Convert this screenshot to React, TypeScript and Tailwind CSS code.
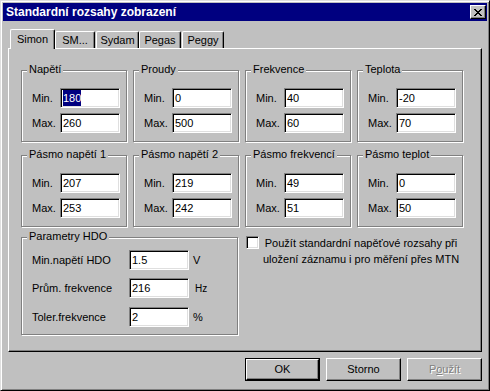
import React from "react";

const raised =
  "border border-t-white border-l-white border-r-black border-b-black shadow-[inset_-1px_-1px_0_#808080]";
const sunken =
  "border border-t-[#808080] border-l-[#808080] border-r-white border-b-white shadow-[inset_1px_1px_0_#000,inset_-1px_-1px_0_#dfdfdf]";
const etched = "border border-[#808080] shadow-[inset_1px_1px_0_#fff,1px_1px_0_#fff]";

const Group = ({
  title,
  className,
  children,
}: {
  title: string;
  className: string;
  children: React.ReactNode;
}) => (
  <div className={`relative ${etched} ${className}`}>
    <span className="absolute -top-[8px] left-[5px] bg-[#c0c0c0] px-[2px] leading-[13px] whitespace-nowrap">
      {title}
    </span>
    {children}
  </div>
);

const TextBox = ({ value, selected }: { value: string; selected?: boolean }) => (
  <div className={`w-[60px] h-[20px] bg-white ${sunken} flex items-center pl-[2px]`}>
    <span className={selected ? "bg-[#000080] text-white" : ""}>{value}</span>
  </div>
);

const Field = ({ label, value, selected }: { label: string; value: string; selected?: boolean }) => (
  <div className="flex items-center h-[20px]">
    <span className="w-[28px]">{label}</span>
    <TextBox value={value} selected={selected} />
  </div>
);

const RangeGroup = ({
  title,
  min,
  max,
  selected,
}: {
  title: string;
  min: string;
  max: string;
  selected?: boolean;
}) => (
  <Group title={title} className="w-[106px] h-[72px] pt-[17px] pl-[10px]">
    <div className="flex flex-col gap-[5px]">
      <Field label="Min." value={min} selected={selected} />
      <Field label="Max." value={max} />
    </div>
  </Group>
);

const tabs = [
  { name: "Simon", w: "w-[45px]", ml: "" },
  { name: "SM...", w: "w-[40px]", ml: "" },
  { name: "Sydam", w: "w-[43px]", ml: "ml-[1px]" },
  { name: "Pegas", w: "w-[42px]", ml: "" },
  { name: "Peggy", w: "w-[42px]", ml: "ml-[1px]" },
];

const Button = ({
  children,
  isDefault,
  disabled,
}: {
  children: React.ReactNode;
  isDefault?: boolean;
  disabled?: boolean;
}) =>
  isDefault ? (
    <div className="w-[75px] h-[23px] border border-black">
      <div className={`w-full h-full ${raised} flex items-center justify-center`}>{children}</div>
    </div>
  ) : (
    <div
      className={`w-[75px] h-[23px] ${raised} flex items-center justify-center ${
        disabled ? "text-[#808080] [text-shadow:1px_1px_0_#fff]" : ""
      }`}
    >
      {children}
    </div>
  );

const App = () => {
  return (
    <div className="w-[490px] h-[391px] bg-[#c0c0c0] border border-t-[#dfdfdf] border-l-[#dfdfdf] border-r-black border-b-black shadow-[inset_1px_1px_0_#fff,inset_-1px_-1px_0_#808080] p-[2px] flex flex-col text-[11px] text-black font-['Liberation_Sans',Arial,sans-serif] select-none">
      {/* Title bar */}
      <div className="h-[18px] bg-[#000080] flex items-center justify-between pl-[3px] pr-[1px]">
        <span className="text-white font-bold text-[12px] leading-none">Standardní rozsahy zobrazení</span>
        <div className={`w-[16px] h-[14px] bg-[#c0c0c0] ${raised} flex items-center justify-center`}>
          <svg width="8" height="7" viewBox="0 0 8 7" shapeRendering="crispEdges">
            <path
              d="M0 0h2v1h-2zM6 0h2v1h-2zM1 1h2v1h-2zM5 1h2v1h-2zM2 2h4v1h-4zM3 3h2v1h-2zM2 4h4v1h-4zM1 5h2v1h-2zM5 5h2v1h-2zM0 6h2v1h-2zM6 6h2v1h-2z"
              fill="#000"
            />
          </svg>
        </div>
      </div>

      {/* Tabs */}
      <div className="mx-[5px] mt-[8px] flex flex-col">
        <div className="h-[19px] flex items-end pl-[2px]">
          {tabs.map((t, i) =>
            i === 0 ? (
              <div
                key={t.name}
                className={`${t.w} h-[20px] -mb-px relative z-10 bg-[#c0c0c0] border-t border-l border-r border-t-white border-l-white border-r-black shadow-[inset_-1px_0_0_#808080] rounded-t-[2px] flex items-center justify-center pb-[1px]`}
              >
                {t.name}
              </div>
            ) : (
              <div
                key={t.name}
                className={`${t.w} ${t.ml} h-[17px] border-t border-l border-r border-t-white border-l-white border-r-black shadow-[inset_-1px_0_0_#808080] rounded-t-[2px] flex items-center justify-center`}
              >
                {t.name}
              </div>
            )
          )}
        </div>

        {/* Panel */}
        <div className={`h-[304px] ${raised} pt-[21px] pl-[12px]`}>
          <div className="flex gap-[6px]">
            <RangeGroup title="Napětí" min="180" max="260" selected />
            <RangeGroup title="Proudy" min="0" max="500" />
            <RangeGroup title="Frekvence" min="40" max="60" />
            <RangeGroup title="Teplota" min="-20" max="70" />
          </div>
          <div className="flex gap-[6px] mt-[13px]">
            <RangeGroup title="Pásmo napětí 1" min="207" max="253" />
            <RangeGroup title="Pásmo napětí 2" min="219" max="242" />
            <RangeGroup title="Pásmo frekvencí" min="49" max="51" />
            <RangeGroup title="Pásmo teplot" min="0" max="50" />
          </div>
          <div className="flex mt-[10px]">
            <Group title="Parametry HDO" className="w-[217px] h-[98px] pt-[12px] pl-[10px]">
              <div className="flex flex-col gap-[8px]">
                <div className="flex items-center h-[20px]">
                  <span className="w-[97px]">Min.napětí HDO</span>
                  <TextBox value="1.5" />
                  <span className="ml-[4px]">V</span>
                </div>
                <div className="flex items-center h-[20px]">
                  <span className="w-[97px]">Prům. frekvence</span>
                  <TextBox value="216" />
                  <span className="ml-[6px] text-[10px]">Hz</span>
                </div>
                <div className="flex items-center h-[20px] mt-[1px]">
                  <span className="w-[97px]">Toler.frekvence</span>
                  <TextBox value="2" />
                  <span className="ml-[4px]">%</span>
                </div>
              </div>
            </Group>
            <div className="flex items-start ml-[8px] -mt-[1px]">
              <div className={`w-[13px] h-[13px] bg-white ${sunken} shrink-0`} />
              <div className="w-[198px] ml-[3px] text-center leading-[16px] -mt-[1px]">
                Použít standardní napěťové rozsahy při
                <br />
                uložení záznamu i pro měření přes MTN
              </div>
            </div>
          </div>
        </div>
      </div>

      {/* Buttons */}
      <div className="flex justify-end gap-[6px] mt-[6px] mr-[5px]">
        <Button isDefault>OK</Button>
        <Button>Storno</Button>
        <Button disabled>
          <span>
            P<span className="underline">o</span>užít
          </span>
        </Button>
      </div>
    </div>
  );
};

export default App;
